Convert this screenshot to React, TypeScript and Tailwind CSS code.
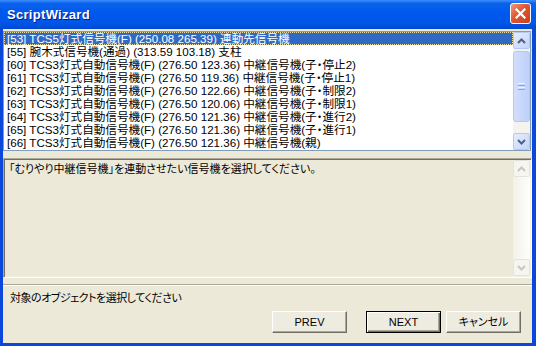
import React from "react";

const rows = [
  "[53] TCS5灯式信号機(F) (250.08 265.39) 連動先信号機",
  "[55] 腕木式信号機(通過) (313.59 103.18) 支柱",
  "[60] TCS3灯式自動信号機(F) (276.50 123.36) 中継信号機(子・停止2)",
  "[61] TCS3灯式自動信号機(F) (276.50 119.36) 中継信号機(子・停止1)",
  "[62] TCS3灯式自動信号機(F) (276.50 122.66) 中継信号機(子・制限2)",
  "[63] TCS3灯式自動信号機(F) (276.50 120.06) 中継信号機(子・制限1)",
  "[64] TCS3灯式自動信号機(F) (276.50 121.36) 中継信号機(子・進行2)",
  "[65] TCS3灯式自動信号機(F) (276.50 121.36) 中継信号機(子・進行1)",
  "[66] TCS3灯式自動信号機(F) (276.50 121.36) 中継信号機(親)",
];

function Chevron({ up, color }: { up: boolean; color: string }) {
  return (
    <svg width="9" height="6" viewBox="0 0 9 6">
      <path
        d={up ? "M1 5 L4.5 1.5 L8 5" : "M1 1 L4.5 4.5 L8 1"}
        fill="none"
        stroke={color}
        strokeWidth="2"
      />
    </svg>
  );
}

function XPButton({ up }: { up: boolean }) {
  return (
    <div className="w-[17px] h-[17px] rounded-[2px] border border-[#B4C8F6] bg-[linear-gradient(135deg,#E6EEFE,#C3D3FB)] flex items-center justify-center">
      <Chevron up={up} color="#4D6185" />
    </div>
  );
}

function DisabledButton({ up }: { up: boolean }) {
  return (
    <div className="w-[17px] h-[17px] rounded-[2px] border border-[#E6E4DA] bg-[#F6F5EF] flex items-center justify-center">
      <Chevron up={up} color="#C9C7BA" />
    </div>
  );
}

export default function App() {
  return (
    <div className="w-[536px] h-[346px] bg-[#0B47DB] flex flex-col font-['Liberation_Sans','Noto_Sans_CJK_JP',sans-serif] [font-feature-settings:'palt'] overflow-hidden">
      {/* Title bar */}
      <div className="h-[29px] shrink-0 flex items-center pl-[7px] pr-[5px] bg-[linear-gradient(to_bottom,#3D8DFF_0%,#0A62EA_12%,#0058EE_45%,#0056E8_80%,#0048CE_100%)]">
        <div className="text-white font-bold text-[13px] tracking-[0.3px] [text-shadow:1px_1px_0_#0A1883] leading-none">
          ScriptWizard
        </div>
        <div className="flex-1" />
        <div className="w-[21px] h-[21px] rounded-[3px] border border-white bg-[linear-gradient(135deg,#F09A80,#E0552F_45%,#C8401A)] flex items-center justify-center mt-[-2px]">
          <svg width="11" height="11" viewBox="0 0 11 11">
            <path d="M1.5 1.5 L9.5 9.5 M9.5 1.5 L1.5 9.5" stroke="white" strokeWidth="2.2" strokeLinecap="square" />
          </svg>
        </div>
      </div>

      {/* Client area */}
      <div className="flex-1 ml-[3px] mr-[4px] mb-[3px] bg-[#ECE9D8] flex flex-col">
        {/* List box */}
        <div className="mt-[2px] mr-[1px] h-[120px] border border-[#7F9DB9] bg-white flex">
          <div className="flex-1 overflow-hidden text-[11.6px] text-black">
            {rows.map((r, i) => (
              <div
                key={i}
                className={
                  i === 0
                    ? "h-[13px] leading-[12px] pl-[2px] whitespace-nowrap bg-[#316AC5] text-white border border-dotted border-[#E6DDA8]"
                    : "h-[13px] leading-[13px] pl-[3px] whitespace-nowrap"
                }
              >
                {r}
              </div>
            ))}
          </div>
          <div className="w-[17px] flex flex-col bg-[#F4F3EE]">
            <XPButton up={true} />
            <div className="mt-[2px] h-[71px] rounded-[3px] border border-[#B4C7F6] bg-[linear-gradient(to_right,#D3DEFC,#BED0FA)] flex flex-col items-center justify-center gap-[1px]">
              <div className="w-[7px] h-[1px] bg-[#EEF3FE]" />
              <div className="w-[7px] h-[1px] bg-[#8CA6E6]" />
              <div className="w-[7px] h-[1px] bg-[#EEF3FE]" />
              <div className="w-[7px] h-[1px] bg-[#8CA6E6]" />
            </div>
            <div className="flex-1" />
            <XPButton up={false} />
          </div>
        </div>

        {/* Message (read only text area) */}
        <div className="mt-[7px] h-[120px] border border-t-[#ACA899] border-l-[#ACA899] border-b-white border-r-white shadow-[inset_1px_1px_0_#716F64,inset_-1px_-1px_0_#F1EFE2] flex p-[1px]">
          <div className="flex-1 pl-[4px] pt-[3px] text-[11px] leading-[13px] text-black whitespace-nowrap">
            「むりやり中継信号機」を連動させたい信号機を選択してください。
          </div>
          <div className="w-[17px] flex flex-col bg-[linear-gradient(to_right,#F3F1E8,#FEFEFB)]">
            <DisabledButton up={true} />
            <div className="flex-1" />
            <DisabledButton up={false} />
          </div>
        </div>

        {/* Separator */}
        <div className="mt-[6px] h-[2px] border-t border-t-[#ACA899] border-b border-b-white" />

        {/* Status */}
        <div className="mt-[6px] pl-[7px] h-[13px] leading-[13px] text-[11px] tracking-[-0.5px] text-black whitespace-nowrap">
          対象のオブジェクトを選択してください
        </div>

        {/* Buttons */}
        <div className="mt-[6px] flex justify-end pr-[11px] text-[11px] text-black">
          <div className="w-[75px] h-[22px] flex items-center justify-center bg-[#EEEBE0] border border-t-white border-l-white border-r-[#716F64] border-b-[#716F64] shadow-[inset_-1px_-1px_0_#ACA899]">
            PREV
          </div>
          <div className="ml-[19px] w-[75px] h-[22px] flex items-center justify-center bg-[#EEEBE0] border border-black shadow-[inset_1px_1px_0_#fff,inset_-1px_-1px_0_#716F64,inset_-2px_-2px_0_#ACA899]">
            NEXT
          </div>
          <div className="ml-[5px] w-[75px] h-[22px] flex items-center justify-center bg-[#EEEBE0] border border-t-white border-l-white border-r-[#716F64] border-b-[#716F64] shadow-[inset_-1px_-1px_0_#ACA899]">
            キャンセル
          </div>
        </div>
      </div>
    </div>
  );
}
